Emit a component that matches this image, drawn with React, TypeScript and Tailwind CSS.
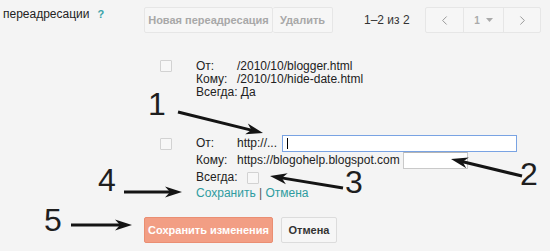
import { ChevronLeft, ChevronRight } from 'lucide-react';

type ArrowProps = { x1: number; y1: number; x2: number; y2: number };

// Thick annotation arrow with a barbed head, drawn from (x1,y1) to the tip (x2,y2)
function Arrow({ x1, y1, x2, y2 }: ArrowProps) {
  const angle = (Math.atan2(y2 - y1, x2 - x1) * 180) / Math.PI;
  const len = Math.hypot(x2 - x1, y2 - y1);
  return (
    <g transform={`translate(${x1} ${y1}) rotate(${angle})`}>
      <line x1={0} y1={0} x2={len - 10} y2={0} stroke="#141414" strokeWidth={3} />
      <polygon
        points={`${len},0 ${len - 17},-5.5 ${len - 12},0 ${len - 17},5.5`}
        fill="#141414"
      />
    </g>
  );
}

function Checkbox({ className = '' }: { className?: string }) {
  return (
    <span
      className={`block w-[12px] h-[12px] shrink-0 border border-[#d2d2d2] bg-[#f7f7f7] rounded-[1px] ${className}`}
    />
  );
}

const NUMBERS = [
  { n: '1', className: 'left-[148px] top-[88px]' },
  { n: '2', className: 'left-[520px] top-[158px]' },
  { n: '3', className: 'left-[345px] top-[166px]' },
  { n: '4', className: 'left-[98px] top-[164px]' },
  { n: '5', className: 'left-[44px] top-[204px]' },
];

export default function App() {
  return (
    <div className="relative w-[550px] h-[251px] overflow-hidden bg-[#f4f4f4] text-[#222] font-['Liberation_Sans',Arial,sans-serif]">
      {/* Toolbar */}
      <div className="flex items-start pt-[7px]">
        <div className="w-[144px] pl-[3px] -mt-[1px] text-[12px] leading-[16px] text-[#222]">
          переадресации
          <span className="ml-[8px] text-[11px] font-bold text-[#3aa3a8]">?</span>
        </div>
        <button className="w-[129px] h-[26px] border border-[#e6e6e6] bg-[#f6f6f6] text-[11px] font-bold text-[#a8a8a8] rounded-[2px]">
          Новая переадресация
        </button>
        <button className="w-[60px] h-[26px] border border-l-0 border-[#e6e6e6] bg-[#f6f6f6] text-[11px] font-bold text-[#a8a8a8] rounded-[2px]">
          Удалить
        </button>
        <div className="w-[92px] h-[26px] pl-[31px] flex items-center text-[12px] text-[#333]">
          1–2 из 2
        </div>
        <div className="flex h-[26px] border border-[#e6e6e6] bg-[#f6f6f6] rounded-[2px]">
          <div className="w-[38px] flex items-center justify-center border-r border-[#e6e6e6]">
            <ChevronLeft size={15} strokeWidth={1.6} className="text-[#999]" />
          </div>
          <div className="w-[40px] flex items-center justify-center gap-[6px] border-r border-[#e6e6e6] text-[10px] font-bold text-[#aaa]">
            1
            <svg width="7" height="4" viewBox="0 0 7 4">
              <polygon points="0,0 7,0 3.5,4" fill="#aaa" />
            </svg>
          </div>
          <div className="w-[36px] flex items-center justify-center">
            <ChevronRight size={15} strokeWidth={1.6} className="text-[#999]" />
          </div>
        </div>
      </div>

      {/* Existing redirect */}
      <div className="mt-[27px] flex pl-[160px]">
        <Checkbox />
        <div className="ml-[24px] text-[12px] leading-[13px]">
          <div className="flex">
            <span className="w-[41px]">От:</span>
            <span>/2010/10/blogger.html</span>
          </div>
          <div className="flex">
            <span className="w-[41px]">Кому:</span>
            <span>/2010/10/hide-date.html</span>
          </div>
          <div>Всегда: Да</div>
        </div>
      </div>

      {/* New redirect being edited */}
      <div className="mt-[36px] flex pl-[160px]">
        <Checkbox className="mt-[3px]" />
        <div className="ml-[24px] text-[12px] leading-[13px]">
          <div className="flex items-center h-[17px]">
            <span className="w-[41px]">От:</span>
            <span>http://...</span>
            <div className="ml-[5px] w-[235px] h-[17px] border border-[#79a3e3] bg-white flex items-center pl-[4px]">
              <span className="block w-[1px] h-[11px] bg-black" />
            </div>
          </div>
          <div className="flex items-center h-[17px]">
            <span className="w-[41px]">Кому:</span>
            <span>https://blogohelp.blogspot.com</span>
            <div className="ml-[3px] w-[65px] h-[17px] border border-[#c9c9c9] border-t-[#b5b5b5] bg-white" />
          </div>
          <div className="flex items-center h-[17px]">
            <span>Всегда:</span>
            <Checkbox className="ml-[9px]" />
          </div>
          <div className="h-[14px] leading-[14px] text-[#2e9ca0]">
            Сохранить <span className="text-[#555]">|</span> Отмена
          </div>
        </div>
      </div>

      {/* Save / cancel */}
      <div className="mt-[17px] flex gap-[8px] pl-[144px]">
        <button className="w-[129px] h-[26px] rounded-[2px] border border-[#ea8e72] bg-[#f29e84] text-[11px] font-bold text-white">
          Сохранить изменения
        </button>
        <button className="w-[56px] h-[26px] rounded-[2px] border border-[#dcdcdc] bg-[#f6f6f6] text-[11px] font-bold text-[#333]">
          Отмена
        </button>
      </div>

      {/* Annotations */}
      <svg className="absolute inset-0 pointer-events-none" width={550} height={251}>
        <Arrow x1={178} y1={112} x2={263} y2={133} />
        <Arrow x1={522} y1={176} x2={451} y2={159} />
        <Arrow x1={343} y1={188} x2={270} y2={176} />
        <Arrow x1={124} y1={192} x2={182} y2={192} />
        <Arrow x1={71} y1={225} x2={132} y2={225} />
      </svg>
      {NUMBERS.map((item) => (
        <span
          key={item.n}
          className={`absolute text-[32px] leading-[32px] text-[#1e1e1e] ${item.className}`}
        >
          {item.n}
        </span>
      ))}
    </div>
  );
}
